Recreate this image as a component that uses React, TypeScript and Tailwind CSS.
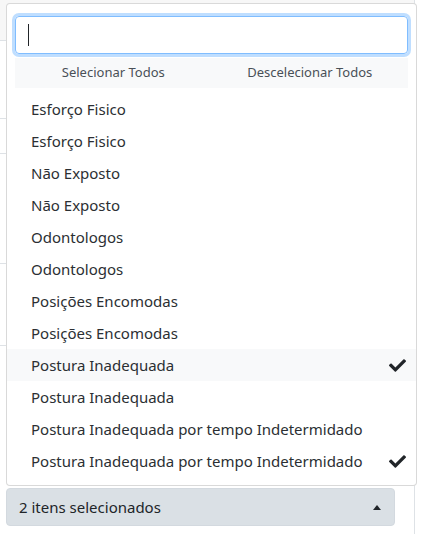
import { FaCheck } from 'react-icons/fa';

const options = [
  { label: 'Esforço Fisico' },
  { label: 'Esforço Fisico' },
  { label: 'Não Exposto' },
  { label: 'Não Exposto' },
  { label: 'Odontologos' },
  { label: 'Odontologos' },
  { label: 'Posições Encomodas' },
  { label: 'Posições Encomodas' },
  { label: 'Postura Inadequada', selected: true, active: true },
  { label: 'Postura Inadequada' },
  { label: 'Postura Inadequada por tempo Indetermidado' },
  { label: 'Postura Inadequada por tempo Indetermidado', selected: true },
];

export default function App() {
  return (
    <div
      className="relative h-[534px] w-[430px] overflow-hidden bg-white text-[#212529]"
      style={{ fontFamily: '"Segoe UI", "Noto Sans", "Liberation Sans", sans-serif' }}
    >
      <div className="flex h-full w-[415px] flex-col border-r border-[#dee2e6]">
        {/* Page rows behind the menu */}
        <div className="h-[41px] shrink-0 border-b border-[#dee2e6] bg-[#f7f7f7]" />
        <div className="h-[78px] shrink-0 border-b border-[#dee2e6]" />
        <div className="h-[35px] shrink-0 border-b border-[#dee2e6]" />
        <div className="h-[110px] shrink-0 border-b border-[#dee2e6]" />
        <div className="h-[82px] shrink-0 border-b border-[#dee2e6]" />
        <div className="h-[142px] shrink-0" />

        {/* Select toggle with menu dropped up */}
        <div className="relative ml-[6px] w-[389px]">
          <div className="absolute bottom-full left-0 mb-[2px] w-[411px] rounded border border-black/15 bg-white py-2">
            <div className="px-2 py-1">
              <div className="flex h-[38px] items-center rounded border border-[#80bdff] px-3 ring-[3px] ring-[#007bff]/25">
                <span className="h-[22px] w-px bg-[#212529]" />
              </div>
            </div>
            <div className="px-2 pb-[5px]">
              <div className="flex h-[30px] bg-[#f8f9fa] text-[13px] text-[#495057]">
                <button type="button" className="flex-1 text-center">
                  Selecionar Todos
                </button>
                <button type="button" className="flex-1 text-center">
                  Descelecionar Todos
                </button>
              </div>
            </div>
            <ul>
              {options.map((opt, i) => (
                <li
                  key={i}
                  className={`flex h-[32px] items-center justify-between pl-6 pr-[10px] text-[15px] text-[#2b2f33] ${
                    opt.active ? 'bg-[#f8f9fa]' : ''
                  }`}
                >
                  <span>{opt.label}</span>
                  {opt.selected && <FaCheck size={17} className="text-[#212529]" />}
                </li>
              ))}
            </ul>
          </div>
          <button
            type="button"
            className="flex h-[38px] w-full items-center justify-between rounded border border-[#d3d9df] bg-[#dae0e5] pl-3 pr-[13px] text-[15px] text-[#212529]"
          >
            <span>2 itens selecionados</span>
            <span className="h-0 w-0 border-x-[4.5px] border-b-[5px] border-x-transparent border-b-[#212529]" />
          </button>
        </div>
      </div>
    </div>
  );
}
